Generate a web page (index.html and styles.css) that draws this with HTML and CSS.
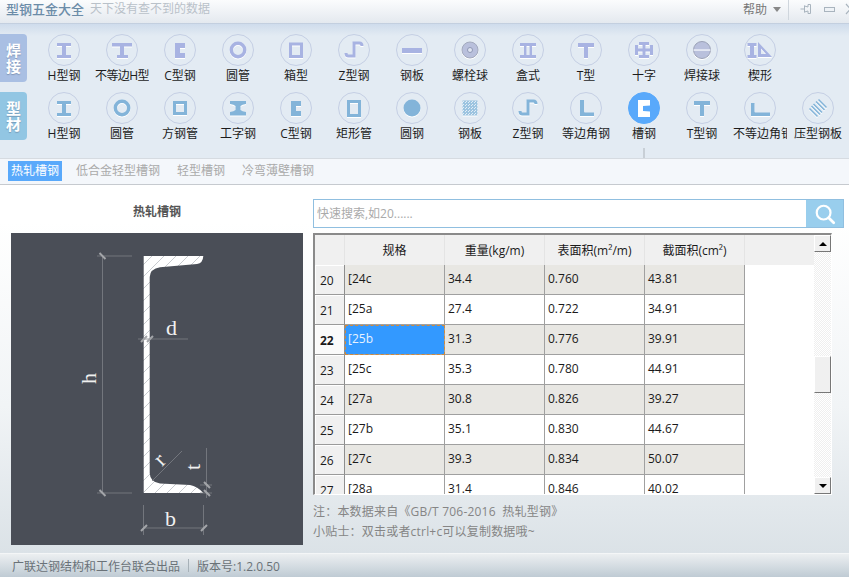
FILE: index.html
```html
<!DOCTYPE html>
<html lang="zh-CN">
<head>
<meta charset="utf-8">
<title>型钢五金大全</title>
<link rel="stylesheet" href="styles.css">
</head>
<body>
<svg class="defs" width="0" height="0" aria-hidden="true">
  <defs>
    <symbol id="i-h" viewBox="0 0 32 32"><path fill="currentColor" d="M9 9h14v3h-5v9h5v3H9v-3h5v-9H9z"/></symbol>
    <symbol id="i-uh" viewBox="0 0 32 32"><path fill="currentColor" d="M6 9h20v3.500h-8v8.500h4v3H11v-3h3v-8.500H6z"/></symbol>
    <symbol id="i-c" viewBox="0 0 32 32"><path fill="currentColor" d="M11 9h10v5h-5v5h5v5H11z"/></symbol>
    <symbol id="i-ring" viewBox="0 0 32 32"><circle cx="16" cy="16" r="6.700" fill="none" stroke="currentColor" stroke-width="3.400"/></symbol>
    <symbol id="i-box" viewBox="0 0 32 32"><rect x="10.500" y="10" width="11" height="12.500" fill="none" stroke="currentColor" stroke-width="3"/></symbol>
    <symbol id="i-z" viewBox="0 0 32 32"><path fill="none" stroke="currentColor" stroke-width="3" d="M8 19q0 3 2.500 3H16V9h5.500q2.500 0 2.500 3"/></symbol>
    <symbol id="i-plate" viewBox="0 0 32 32"><rect x="6" y="14" width="20" height="5" fill="currentColor"/></symbol>
    <symbol id="i-bolt" viewBox="0 0 32 32"><circle cx="16" cy="16" r="8" fill="#b9c0dc" stroke="#a2a9bd"/><circle cx="16" cy="16" r="2.500" fill="#dfe4f2" stroke="#8f97b5"/></symbol>
    <symbol id="i-hbox" viewBox="0 0 32 32"><path fill="currentColor" d="M8 9h16v3h-4v9h4v3H8v-3h4v-9H8zm6.500 3v9h3v-9z"/></symbol>
    <symbol id="i-t" viewBox="0 0 32 32"><path fill="currentColor" d="M8 9h16v4h-6v11h-4V13H8z"/></symbol>
    <symbol id="i-cross" viewBox="0 0 32 32"><path fill="currentColor" d="M11 8h10v3h-3.500v3.500H22V11h3v10h-3v-3.500h-4.500V21H21v3H11v-3h3.500v-3.500H10V21H7V11h3v3.500h4.500V11H11z"/></symbol>
    <symbol id="i-weld" viewBox="0 0 32 32"><circle cx="16" cy="16" r="8.500" fill="#b9c0dc" stroke="#9aa1b6"/><rect x="7.500" y="15.300" width="17" height="1.500" fill="#eef1f8"/></symbol>
    <symbol id="i-wedge" viewBox="0 0 32 32"><path fill="currentColor" d="M3.500 9h9v3H10v9h2.500v3h-9v-3H6v-9H3.500z"/><path fill="currentColor" fill-rule="evenodd" d="M14 8l14 15H14zm3 6.500V20h5z"/></symbol>
    <symbol id="i-sq" viewBox="0 0 32 32"><rect x="10.500" y="10.500" width="11" height="11" fill="none" stroke="currentColor" stroke-width="3"/></symbol>
    <symbol id="i-i" viewBox="0 0 32 32"><path fill="currentColor" d="M8 9h16v3q-4 .5-5.500 2v4q1.500 1.500 5.500 2v3.500H8V20q4-.5 5.500-2v-4Q12 12.500 8 12z"/></symbol>
    <symbol id="i-rect" viewBox="0 0 32 32"><rect x="10.500" y="9.500" width="11" height="14" fill="none" stroke="currentColor" stroke-width="3"/></symbol>
    <symbol id="i-disc" viewBox="0 0 32 32"><circle cx="16" cy="16" r="8.500" fill="currentColor"/></symbol>
    <pattern id="dots" width="3" height="3" patternUnits="userSpaceOnUse"><rect width="3" height="3" fill="#9cc4e0"/><rect width="1" height="1" fill="#e2edf6"/><rect x="2" y="1" width="1" height="1" fill="#e2edf6"/></pattern>
    <symbol id="i-mesh" viewBox="0 0 32 32"><rect x="8.500" y="8.500" width="15" height="15" fill="url(#dots)"/></symbol>
    <symbol id="i-l" viewBox="0 0 32 32"><path fill="currentColor" d="M10 8h4v11.500q0 1 1 1h9V24H10z"/></symbol>
    <symbol id="i-ul" viewBox="0 0 32 32"><path fill="currentColor" d="M7 11h3.500v8.500q0 1 1 1H26V24H7z"/></symbol>
    <symbol id="i-press" viewBox="0 0 32 32"><path fill="none" stroke="currentColor" stroke-width="1.500" d="M7.500 16.500l8 8M9.500 14l8.500 8.500M11.500 12l8.500 8.500M14 9.500l8.500 8.500M16.500 7.500l8 8"/></symbol>
    <symbol id="i-channel" viewBox="0 0 32 32"><path fill="#fff" d="M10 8h12v4.500l-7 .5v6l7 .5V24H10z"/></symbol>
    <pattern id="hatch" width="12" height="12" patternUnits="userSpaceOnUse"><rect width="12" height="12" fill="#fff"/><path d="M-1 13L13-1" stroke="#c2c5ca" stroke-width=".9"/></pattern>
  </defs>
</svg>

<div class="app">
  <header class="titlebar">
    <strong class="brand">型钢五金大全</strong>
    <span class="slogan">天下没有查不到的数据</span>
    <div class="win-tools">
      <span class="help">帮助</span>
      <span class="caret"></span>
      <span class="win-sep"></span>
      <svg class="win-icon pin" viewBox="0 0 12 12"><path fill="none" stroke="#a9b4be" d="M.5 6h4M4.500 2.500v7M4.500 3l3.500 1V1.500h2.500v9H8V8L4.500 9"/></svg>
      <svg class="win-icon min" viewBox="0 0 12 12"><rect x=".5" y="4.500" width="10" height="4" fill="#eef2f6" stroke="#a9b4be"/></svg>
      <svg class="win-icon close" viewBox="0 0 12 12"><path fill="none" stroke="#a9b4be" stroke-width="1.200" d="M1 1l9 10M10 1L1 11"/></svg>
    </div>
  </header>

  <nav class="toolbar">
    <div class="tool-row tint-a">
      <div class="tag tag-a"><span>焊</span><span>接</span></div>
      <a class="tool"><span class="disc"><svg><use href="#i-h"/></svg></span><span class="label">H型钢</span></a>
      <a class="tool"><span class="disc"><svg><use href="#i-uh"/></svg></span><span class="label tight">不等边H型</span></a>
      <a class="tool"><span class="disc"><svg><use href="#i-c"/></svg></span><span class="label">C型钢</span></a>
      <a class="tool"><span class="disc"><svg><use href="#i-ring"/></svg></span><span class="label">圆管</span></a>
      <a class="tool"><span class="disc"><svg><use href="#i-box"/></svg></span><span class="label">箱型</span></a>
      <a class="tool"><span class="disc"><svg><use href="#i-z"/></svg></span><span class="label">Z型钢</span></a>
      <a class="tool"><span class="disc"><svg><use href="#i-plate"/></svg></span><span class="label">钢板</span></a>
      <a class="tool"><span class="disc"><svg><use href="#i-bolt"/></svg></span><span class="label">螺栓球</span></a>
      <a class="tool"><span class="disc"><svg><use href="#i-hbox"/></svg></span><span class="label">盒式</span></a>
      <a class="tool"><span class="disc"><svg><use href="#i-t"/></svg></span><span class="label">T型</span></a>
      <a class="tool"><span class="disc"><svg><use href="#i-cross"/></svg></span><span class="label">十字</span></a>
      <a class="tool"><span class="disc"><svg><use href="#i-weld"/></svg></span><span class="label">焊接球</span></a>
      <a class="tool"><span class="disc"><svg><use href="#i-wedge"/></svg></span><span class="label">楔形</span></a>
    </div>
    <div class="tool-row tint-b">
      <div class="tag tag-b"><span>型</span><span>材</span></div>
      <a class="tool"><span class="disc"><svg><use href="#i-h"/></svg></span><span class="label">H型钢</span></a>
      <a class="tool"><span class="disc"><svg><use href="#i-ring"/></svg></span><span class="label">圆管</span></a>
      <a class="tool"><span class="disc"><svg><use href="#i-sq"/></svg></span><span class="label">方钢管</span></a>
      <a class="tool"><span class="disc"><svg><use href="#i-i"/></svg></span><span class="label">工字钢</span></a>
      <a class="tool"><span class="disc"><svg><use href="#i-c"/></svg></span><span class="label">C型钢</span></a>
      <a class="tool"><span class="disc"><svg><use href="#i-rect"/></svg></span><span class="label">矩形管</span></a>
      <a class="tool"><span class="disc"><svg><use href="#i-disc"/></svg></span><span class="label">圆钢</span></a>
      <a class="tool"><span class="disc"><svg><use href="#i-mesh"/></svg></span><span class="label">钢板</span></a>
      <a class="tool"><span class="disc"><svg><use href="#i-z"/></svg></span><span class="label">Z型钢</span></a>
      <a class="tool"><span class="disc"><svg><use href="#i-l"/></svg></span><span class="label">等边角钢</span></a>
      <a class="tool current"><span class="disc"><svg><use href="#i-channel"/></svg></span><span class="label">槽钢</span><span class="notch"></span></a>
      <a class="tool"><span class="disc"><svg><use href="#i-t"/></svg></span><span class="label">T型钢</span></a>
      <a class="tool"><span class="disc"><svg><use href="#i-ul"/></svg></span><span class="label">不等边角钢</span></a>
      <a class="tool"><span class="disc"><svg><use href="#i-press"/></svg></span><span class="label">压型钢板</span></a>
    </div>
  </nav>

  <div class="subtabs">
    <a class="subtab active">热轧槽钢</a>
    <a class="subtab">低合金轻型槽钢</a>
    <a class="subtab">轻型槽钢</a>
    <a class="subtab">冷弯薄壁槽钢</a>
  </div>

  <main class="main">
    <section class="figure">
      <h2 class="figure-title">热轧槽钢</h2>
      <svg class="drawing" viewBox="11 233 292 312">
        <rect x="11" y="233" width="292" height="312" fill="#4a4e57"/>
        <path fill="url(#hatch)" d="M143.700 256H203.300Q203 263 197 264L160 267.300Q150 269 149.700 277V473Q150 482 160 483.500L190 485Q197 486 203.300 493H143.700Z"/>
        <g fill="none" stroke="#7d8087" stroke-width=".8">
          <path d="M97 256h35M97 493h35M102.500 256v237M138 339h50M143.500 505v30M203.500 505v30M143 528h60M206.500 448v50M200 485h12M200 493h12M182 451l-30 30"/>
        </g>
        <g fill="none" stroke="#a3a5a9" stroke-width="2">
          <path d="M99.500 253l6 6M99.500 490l6 6M141 342l6-6M147 342l6-6M141 531l6-6M201 531l6-6M204 482l6 6M204 490l6 6"/>
        </g>
        <g class="dim-text">
          <text x="166" y="335">d</text>
          <text x="165" y="526">b</text>
          <text transform="translate(96 384) rotate(-90)">h</text>
          <text transform="translate(162 467) rotate(-45)">r</text>
          <text transform="translate(200 470) rotate(-90)">t</text>
        </g>
      </svg>
    </section>

    <section class="data">
      <div class="search">
        <input class="search-input" type="text" placeholder="快速搜索,如20......">
        <button class="search-btn" type="button" aria-label="搜索">
          <svg viewBox="0 0 24 24" width="22" height="22"><circle cx="10.500" cy="10.500" r="7.500" fill="none" stroke="#fff" stroke-width="2.400"/><path d="M16 16l5.500 5.500" stroke="#fff" stroke-width="3" stroke-linecap="round"/></svg>
        </button>
      </div>

      <div class="grid-frame">
        <div class="grid-view">
          <table class="grid">
            <thead>
              <tr><th class="corner"></th><th>规格</th><th>重量(kg/m)</th><th>表面积(m²/m)</th><th>截面积(cm²)</th></tr>
            </thead>
            <tbody>
              <tr class="alt"><th>20</th><td>[24c</td><td>34.4</td><td>0.760</td><td>43.81</td></tr>
              <tr><th>21</th><td>[25a</td><td>27.4</td><td>0.722</td><td>34.91</td></tr>
              <tr class="alt sel"><th>22</th><td class="focus">[25b</td><td>31.3</td><td>0.776</td><td>39.91</td></tr>
              <tr><th>23</th><td>[25c</td><td>35.3</td><td>0.780</td><td>44.91</td></tr>
              <tr class="alt"><th>24</th><td>[27a</td><td>30.8</td><td>0.826</td><td>39.27</td></tr>
              <tr><th>25</th><td>[27b</td><td>35.1</td><td>0.830</td><td>44.67</td></tr>
              <tr class="alt"><th>26</th><td>[27c</td><td>39.3</td><td>0.834</td><td>50.07</td></tr>
              <tr><th>27</th><td>[28a</td><td>31.4</td><td>0.846</td><td>40.02</td></tr>
            </tbody>
          </table>
        </div>
        <div class="scrollbar">
          <span class="sb-btn"><span class="arrow up"></span></span>
          <div class="sb-track"><span class="sb-thumb"></span></div>
          <span class="sb-btn"><span class="arrow down"></span></span>
        </div>
      </div>

      <p class="note">注：本数据来自《GB/T 706-2016&nbsp; 热轧型钢》</p>
      <p class="note">小贴士：双击或者ctrl+c可以复制数据哦~</p>
    </section>
  </main>

  <footer class="status">
    <span>广联达钢结构和工作台联合出品</span>
    <span class="status-sep"></span>
    <span>版本号:1.2.0.50</span>
  </footer>
</div>
</body>
</html>
```

FILE: styles.css
```css
* { box-sizing: border-box; }
html, body { margin: 0; padding: 0; height: 100%; }
body {
  font-family: "Open Sans", "Noto Sans CJK SC", sans-serif;
  font-size: 12px;
  color: #1a1a1a;
  overflow: hidden;
}
.defs { position: absolute; }
.app { width: 849px; height: 577px; display: flex; flex-direction: column; overflow: hidden; }

/* title bar */
.titlebar {
  height: 24px;
  flex: none;
  display: flex;
  align-items: center;
  padding-left: 6px;
  background: linear-gradient(#fbfcfd, #e4e9ef);
  border-bottom: 1px solid #c3cfdf;
  line-height: 18px;
}
.brand { font-size: 13px; font-weight: 500; color: #6b8ca8; margin-top: -5px; }
.slogan { margin-left: 6px; color: #b9c1c9; margin-top: -5px; }
.win-tools { margin-left: auto; display: flex; align-items: center; height: 23px; }
.help { color: #777; margin-top: -4px; }
.caret {
  width: 0; height: 0; margin: -4px 0 0 6px;
  border: 4px solid transparent; border-top: 5px solid #888; border-bottom: 0;
}
.win-sep { width: 1px; height: 20px; background: #cfd6dd; margin: -3px 0 0 7px; }
.win-icon { width: 12px; height: 12px; margin-top: -6px; flex: none; }
.pin { margin-left: 11px; }
.min { margin-left: 12px; }
.close { margin-left: 9px; margin-right: -8px; }

/* toolbar */
.toolbar {
  height: 134px;
  flex: none;
  padding-top: 10px;
  background: linear-gradient(#cfdcec, #e3ebf3 12px);
}
.tool-row { display: flex; height: 58px; align-items: flex-start; }
.tint-a { color: #a8b3e2; }
.tint-b { color: #83b4d9; }
.tag {
  width: 27px; height: 48px; margin-right: 8px; flex: none;
  display: flex; flex-direction: column; align-items: center; justify-content: center;
  border-radius: 0 4px 4px 0;
  color: #fff; font-size: 15px; font-weight: 700; line-height: 16px;
  text-shadow: 0 1px 1px rgba(90, 110, 140, .5);
}
.tag-a { background: #a9bfe3; }
.tag-b { background: #92c6e3; }
.tool { width: 58px; flex: none; display: flex; flex-direction: column; align-items: center; position: relative; }
.disc { width: 32px; height: 32px; border: 1px solid #c5cfe4; border-radius: 50%; display: flex; align-items: center; justify-content: center; }
.disc svg { width: 32px; height: 32px; flex: none; filter: drop-shadow(0 1px 0 #fff); }
.label { width: 54px; height: 16px; margin-top: 2px; line-height: 16px; color: #1c1c1c; text-align: center; white-space: nowrap; overflow: hidden; }
.label.tight { letter-spacing: -.6px; }
.current .disc { background: #59a9fb; border-color: #59a9fb; }
.notch { position: absolute; left: 28px; top: 56px; width: 2px; height: 10px; background: #c8cfd6; }

/* sub tabs */
.subtabs {
  height: 27px; flex: none;
  display: flex; align-items: center;
  padding: 0 0 1px 8px;
  background: #f4f7fb;
  border-top: 1px solid #d6dbe1;
  border-bottom: 1px solid #c6cacf;
}
.subtab { color: #aaa; line-height: 20px; margin-right: 17px; }
.subtab.active { background: #59a9fb; color: #fff; padding: 0 3px; margin-right: 14px; }

/* main */
.main {
  flex: 1; min-height: 0;
  display: flex;
  background: linear-gradient(#fff 10%, #f1f4f6 60%, #dbe2e7);
}
.figure { width: 292px; margin-left: 11px; flex: none; }
.figure-title { margin: 0; height: 48px; padding-top: 18px; font-size: 12px; line-height: 18px; font-weight: 700; text-align: center; color: #555; }
.drawing { display: block; width: 292px; height: 312px; }
.dim-text { fill: #f0f0f0; font-family: "Liberation Serif", serif; font-size: 22px; }

.data { width: 531px; margin-left: 10px; flex: none; padding-top: 14px; }
.search { display: flex; height: 29px; border: 1px solid #90bfe0; background: #fff; }
.search-input { flex: 1; min-width: 0; border: 0; outline: 0; background: transparent; padding: 0 3px; font: inherit; color: #333; }
.search-input::placeholder { color: #aaa; opacity: 1; }
.search-btn { width: 37px; flex: none; border: 0; padding: 0; background: #99ceed; display: flex; align-items: center; justify-content: center; }

.grid-frame {
  width: 519px; height: 262px; margin-top: 5px;
  display: flex;
  border-top: 2px solid #8a8a8a;
  border-left: 2px solid #8a8a8a;
  border-right: 1px solid #fff;
  border-bottom: 1px solid #fff;
  background: #fff;
}
.grid-view {
  width: 499px; flex: none; overflow: hidden;
  background: linear-gradient(#f0f0f0, #f0f0f0) no-repeat 0 0 / 100% 30px, #fff;
}
.grid { border-collapse: separate; border-spacing: 0; table-layout: fixed; width: 430px; }
.grid thead th {
  height: 30px; padding: 1px 0 0; font-weight: 400; text-align: center; color: #1a1a1a;
  background: #f0f0f0;
  border-right: 1px solid #e4e4e4;
  width: 100px; line-height: 16px;
}
.grid thead th.corner { width: 30px; }
.grid tbody th {
  height: 30px; padding: 2px 0 0 5px; font-weight: 400; text-align: left;
  background: #f0f0f0;
  border-right: 1px solid #8e8e8e;
  border-bottom: 1px solid #9a9a9a;
  box-shadow: inset 1px 1px 0 #fff;
}
.grid td {
  height: 30px; padding: 0 3px 1px; line-height: 16px;
  border-right: 1px solid #a0a0a0;
  border-bottom: 1px solid #a0a0a0;
  background: #fff;
}
.grid .alt td { background: #e8e7e3; }
.grid .sel th { font-weight: 700; background: #fafafa; }
.grid .alt td.focus { background: #3399ff; color: #e8f3ff; outline: 1px dashed #d08a3c; outline-offset: -1px; }

.scrollbar { width: 17px; margin-left: 0; flex: none; display: flex; flex-direction: column; }
.sb-btn {
  height: 17px; flex: none; display: flex; align-items: center; justify-content: center;
  background: #f0f0f0;
  border: 1px solid;
  border-color: #fff #777 #777 #fff;
}
.sb-track {
  flex: 1; min-height: 0;
  background: repeating-conic-gradient(#efefef 0 25%, #fff 0 50%) 0 0 / 2px 2px;
}
.sb-thumb {
  display: block; height: 37px; margin-top: 104px;
  background: #f0f0f0;
  border: 1px solid;
  border-color: #fff #777 #777 #fff;
}
.arrow { width: 0; height: 0; border-left: 4px solid transparent; border-right: 4px solid transparent; }
.arrow.up { border-bottom: 4px solid #000; }
.arrow.down { border-top: 4px solid #000; }

.note { margin: 0; line-height: 20px; color: #858585; letter-spacing: .2px; }
.grid-frame + .note { margin-top: 7px; }

/* status */
.status {
  height: 24px; flex: none;
  display: flex; align-items: center;
  padding-left: 12px;
  color: #6a7278;
  background: linear-gradient(#eceff1, #bfcbd4);
  border-top: 1px solid #f4f6f7;
}
.status-sep { width: 1px; height: 13px; background: #a7b1b8; margin: 0 8px; }
```
